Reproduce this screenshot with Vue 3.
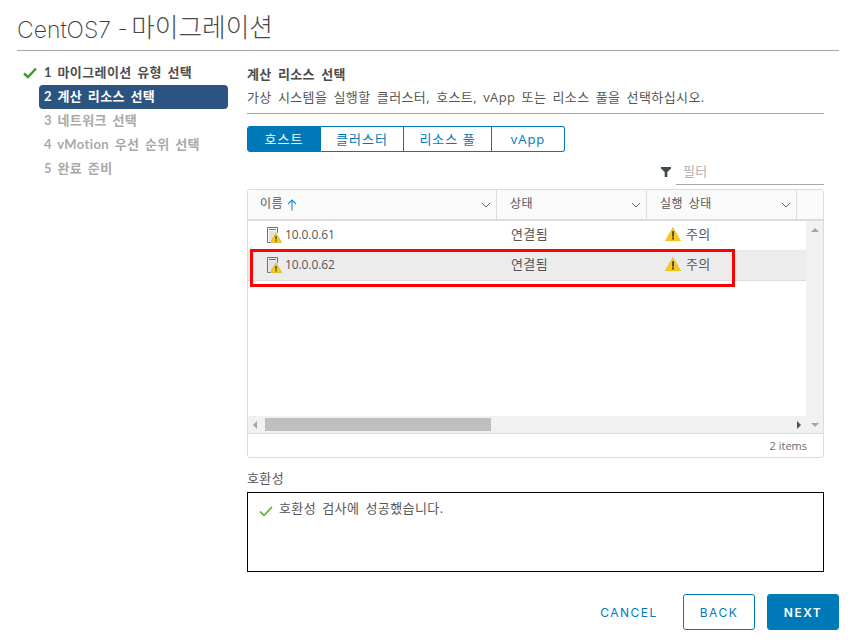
<script setup>
const steps = [
  { label: '1 마이그레이션 유형 선택', state: 'done' },
  { label: '2 계산 리소스 선택', state: 'active' },
  { label: '3 네트워크 선택', state: 'todo' },
  { label: '4 vMotion 우선 순위 선택', state: 'todo' },
  { label: '5 완료 준비', state: 'todo' },
]
const tabs = ['호스트', '클러스터', '리소스 풀', 'vApp']
const columns = ['상태', '실행 상태']
const rows = [
  { ip: '10.0.0.61', selected: false },
  { ip: '10.0.0.62', selected: true },
]
</script>

<template>
  <div class="dialog">
    <h1 class="title">CentOS7 - <span class="title-kr">마이그레이션</span></h1>
    <div class="body">
      <ol class="steps">
        <li v-for="s in steps" :key="s.label" class="step" :class="s.state">
          <svg v-if="s.state === 'done'" class="step-check" viewBox="0 0 14 12" width="14" height="12">
            <path d="M1 6.5 L5 10 L13 1.5" fill="none" stroke="#3f9a1e" stroke-width="2.4" />
          </svg>
          <span class="step-label">{{ s.label }}</span>
        </li>
      </ol>
      <main class="main">
        <h2 class="heading">계산 리소스 선택</h2>
        <p class="sub">가상 시스템을 실행할 클러스터, 호스트, vApp 또는 리소스 풀을 선택하십시오.</p>
        <div class="tabs">
          <button v-for="(t, i) in tabs" :key="t" class="tab" :class="['tab' + i, { on: i === 0 }]">{{ t }}</button>
        </div>
        <div class="filter-row">
          <svg class="funnel" viewBox="0 0 10 10" width="10" height="10">
            <path d="M0 0 H10 V1.5 L6.3 5 V10 H3.7 V5 L0 1.5 Z" fill="#3f4a50" />
          </svg>
          <div class="filter">필터</div>
        </div>
        <div class="grid">
          <div class="ghead">
            <div class="hcell first">
              <span class="hlabel">이름</span>
              <svg class="sort" viewBox="0 0 10 12" width="10" height="12">
                <path d="M5 11.5 V1 M1 5 L5 1 L9 5" fill="none" stroke="#0f8fd6" stroke-width="1.1" />
              </svg>
              <svg class="chev" viewBox="0 0 10 6" width="10" height="6">
                <path d="M1 1 L5 5 L9 1" fill="none" stroke="#666" stroke-width="1" />
              </svg>
            </div>
            <div v-for="c in columns" :key="c" class="hcell col">
              <span class="hlabel">{{ c }}</span>
              <svg class="chev" viewBox="0 0 10 6" width="10" height="6">
                <path d="M1 1 L5 5 L9 1" fill="none" stroke="#666" stroke-width="1" />
              </svg>
            </div>
            <div class="hcell tail"></div>
          </div>
          <div class="gmid">
            <div class="viewport">
              <div class="rows">
                <div v-for="r in rows" :key="r.ip" class="row" :class="{ sel: r.selected }">
                  <div class="cell namecell">
                    <svg class="hosticon" viewBox="0 0 15 16" width="15" height="16">
                      <path d="M0.5 15.5 V0.5 H10.5 V6" fill="none" stroke="#3f7fa6" stroke-width="1" />
                      <path d="M0.5 15.5 H4" fill="none" stroke="#3f7fa6" stroke-width="1" />
                      <rect x="2" y="2" width="7" height="1" fill="#3f7fa6" />
                      <rect x="2" y="4" width="7" height="10.5" fill="#dde3e7" />
                      <path d="M9 6 L14.6 15.5 H3.4 Z" fill="#f8c91f" stroke="#dcae06" stroke-width="0.7" />
                      <rect x="8.4" y="9" width="1.3" height="3.5" fill="#3a3a2a" />
                      <rect x="8.4" y="13.1" width="1.3" height="1.3" fill="#3a3a2a" />
                    </svg>
                    <span class="ip">{{ r.ip }}</span>
                  </div>
                  <div class="cell statecell">연결됨</div>
                  <div class="cell runcell">
                    <svg class="warn" viewBox="0 0 16 14" width="16" height="14">
                      <path d="M8 0.6 L15.6 14 H0.4 Z" fill="#f8c91f" stroke="#e2b40c" stroke-width="0.6" />
                      <rect x="7.1" y="4.2" width="1.9" height="5.4" fill="#4a4320" />
                      <rect x="7.1" y="10.4" width="1.9" height="2" fill="#4a4320" />
                    </svg>
                    <span>주의</span>
                  </div>
                </div>
              </div>
              <div class="hbar">
                <span class="arrow left"></span>
                <span class="thumb"></span>
                <span class="arrow right"></span>
              </div>
            </div>
            <div class="vbar">
              <span class="arrow up"></span>
              <span class="arrow down"></span>
            </div>
          </div>
          <div class="gfoot">2 items</div>
          <div class="redbox"></div>
        </div>
        <div class="compat-label">호환성</div>
        <div class="compat">
          <svg class="okcheck" viewBox="0 0 14 11" width="14" height="11">
            <path d="M1 5.5 L5 9.5 L13 1" fill="none" stroke="#5aa220" stroke-width="1.5" />
          </svg>
          <span>호환성 검사에 성공했습니다.</span>
        </div>
      </main>
    </div>
    <footer class="actions">
      <button class="btn link">CANCEL</button>
      <button class="btn outline">BACK</button>
      <button class="btn solid">NEXT</button>
    </footer>
  </div>
</template>

<style>
html, body { margin: 0; background: #fff; }
</style>

<style scoped>
* { box-sizing: border-box; }
.dialog {
  width: 854px;
  height: 643px;
  padding: 0 15px 0 17px;
  font-family: "Open Sans", "Noto Sans CJK KR", sans-serif;
  color: #565656;
  overflow: hidden;
  letter-spacing: 0.4px;
  word-spacing: 2.4px;
}
.title {
  margin: 0;
  height: 51px;
  padding-top: 12px;
  border-bottom: 1px solid #a8a8a8;
  font-family: "Inter", "Noto Sans CJK KR", sans-serif;
  font-weight: 200;
  font-size: 23px;
  line-height: 34px;
  color: #3a3a3a;
  letter-spacing: 0;
  word-spacing: 0;
  white-space: nowrap;
}
.title-kr {
  font-size: 25.7px;
  font-weight: 300;
  position: relative;
  top: -1px;
  margin-left: -3px;
  color: #4a4a4a;
}
.body { display: flex; height: 521px; }
.steps {
  list-style: none;
  margin: 0;
  padding: 10px 0 0 22px;
  width: 230px;
  flex: none;
}
.step {
  position: relative;
  height: 24px;
  width: 189px;
  padding-left: 5px;
  font-family: "Lato", "Noto Sans CJK KR", sans-serif;
  font-size: 13px;
  font-weight: 700;
  line-height: 22px;
  word-spacing: 2px;
  border-radius: 4px;
  white-space: nowrap;
}
.step.done { color: #4f4f4f; }
.step.active { background: #2b5480; color: #fff; }
.step.todo { color: #a9a9a9; }
.step-check { position: absolute; left: -16px; top: 6px; }
.main { width: 577px; flex: none; }
.heading {
  margin: 0;
  padding-top: 13px;
  height: 35px;
  font-size: 13px;
  line-height: 20px;
  font-weight: 700;
  color: #4a4a4a;
}
.sub {
  margin: 0;
  height: 28px;
  font-size: 13px;
  line-height: 22px;
  border-bottom: 1px solid #a8a8a8;
  color: #565656;
  white-space: nowrap;
}
.tabs { display: flex; margin-top: 12px; height: 26px; }
.tab {
  height: 26px;
  border: 1px solid #0079b8;
  border-left: 0;
  background: #fff;
  color: #0079b8;
  font: inherit;
  font-size: 13px;
  line-height: 22px;
  letter-spacing: 1px;
  padding: 0;
}
.tab0 { width: 74px; border-left: 1px solid #0079b8; border-radius: 3px 0 0 3px; }
.tab1 { width: 83px; }
.tab2 { width: 88px; }
.tab3 { width: 73px; border-radius: 0 3px 3px 0; }
.tab.on { background: #0079b8; color: #fff; }
.filter-row {
  display: flex;
  justify-content: flex-end;
  align-items: flex-start;
  height: 37px;
  gap: 5px;
}
.funnel { margin-top: 15px; }
.filter {
  width: 148px;
  height: 33px;
  padding: 9px 0 0 7px;
  border-bottom: 1px solid #a8a8a8;
  font-size: 13px;
  line-height: 20px;
  color: #b0b0b0;
}
.grid {
  position: relative;
  height: 269px;
  border: 1px solid #dcdcdc;
  border-radius: 3px;
  display: flex;
  flex-direction: column;
}
.ghead {
  display: flex;
  height: 31px;
  flex: none;
  background: #fafafa;
  border-bottom: 2px solid #dcdcdc;
}
.hcell {
  display: flex;
  align-items: center;
  border-right: 1px solid #dcdcdc;
  font-size: 12px;
  color: #565656;
  position: relative;
}
.hlabel { font-size: 12px; line-height: 26px; margin-top: -1px; }
.first { width: 249px; padding-left: 12px; flex: none; }
.col { width: 150px; padding-left: 13px; flex: none; }
.tail { flex: 1; border-right: 0; }
.sort { margin: 0 0 0 4px; }
.chev { position: absolute; right: 5px; top: 12px; }
.gmid { display: flex; height: 212px; flex: none; }
.viewport { width: 558px; display: flex; flex-direction: column; }
.rows { flex: 1; }
.row {
  display: flex;
  height: 30px;
  border-bottom: 1px solid #e8e8e8;
  font-size: 13px;
  color: #565656;
}
.row.sel { background: #ececec; border-bottom-color: #dcdcdc; }
.cell { display: flex; align-items: center; padding-bottom: 4px; }
.namecell { width: 248px; padding-left: 19px; }
.hosticon { margin-right: 3px; margin-top: 3px; flex: none; }
.ip { font-size: 12px; letter-spacing: -0.1px; padding-top: 1px; }
.statecell { width: 150px; padding-left: 15px; }
.runcell { width: 160px; padding-left: 19px; gap: 5px; }
.warn { margin-top: 1px; }
.hbar {
  position: relative;
  height: 17px;
  background: #f1f1f1;
  flex: none;
  display: flex;
  align-items: center;
}
.thumb {
  position: absolute;
  left: 17px;
  top: 2px;
  width: 226px;
  height: 13px;
  background: #bfbfbf;
}
.arrow { width: 0; height: 0; display: block; position: absolute; }
.arrow.left {
  left: 5px;
  top: 5px;
  border: 4px solid transparent;
  border-left: 0;
  border-right: 4px solid #a5a5a5;
}
.arrow.right {
  right: 5px;
  top: 5px;
  border: 4px solid transparent;
  border-right: 0;
  border-left: 4px solid #505050;
}
.vbar {
  position: relative;
  flex: 1;
  background: #f1f1f1;
}
.arrow.up {
  left: 5px;
  top: 7px;
  border: 4px solid transparent;
  border-top: 0;
  border-bottom: 4px solid #a5a5a5;
}
.arrow.down {
  left: 5px;
  bottom: 6px;
  border: 4px solid transparent;
  border-bottom: 0;
  border-top: 4px solid #a5a5a5;
}
.gfoot {
  flex: 1;
  border-top: 1px solid #dcdcdc;
  padding: 4px 16px 0 0;
  text-align: right;
  font-size: 11px;
  line-height: 16px;
  color: #6a6a6a;
  word-spacing: 0;
  letter-spacing: 0;
}
.redbox {
  position: absolute;
  left: 2px;
  top: 59px;
  width: 485px;
  height: 38px;
  border: 3px solid #f00;
}
.compat-label {
  height: 34px;
  padding-top: 9px;
  font-size: 13px;
  line-height: 22px;
  color: #565656;
}
.compat {
  display: flex;
  align-items: flex-start;
  height: 80px;
  border: 1px solid #000;
  padding: 5px 0 0 11px;
  font-size: 13px;
  line-height: 20px;
  gap: 6px;
}
.okcheck { margin-top: 8px; }
.actions {
  display: flex;
  justify-content: flex-end;
  align-items: center;
  margin-top: 22px;
  height: 36px;
}
.btn {
  height: 36px;
  width: 72px;
  border-radius: 3px;
  font-family: "Inter", "Open Sans", sans-serif;
  font-size: 12px;
  letter-spacing: 1.5px;
  padding: 0;
  background: #fff;
}
.btn.link { border: 0; color: #0079b8; width: 62px; margin-right: 23px; }
.btn.outline { border: 1px solid #0079b8; color: #0079b8; margin-right: 12px; }
.btn.solid { border: 1px solid #0079b8; background: #0079b8; color: #fff; font-weight: 600; }
</style>
